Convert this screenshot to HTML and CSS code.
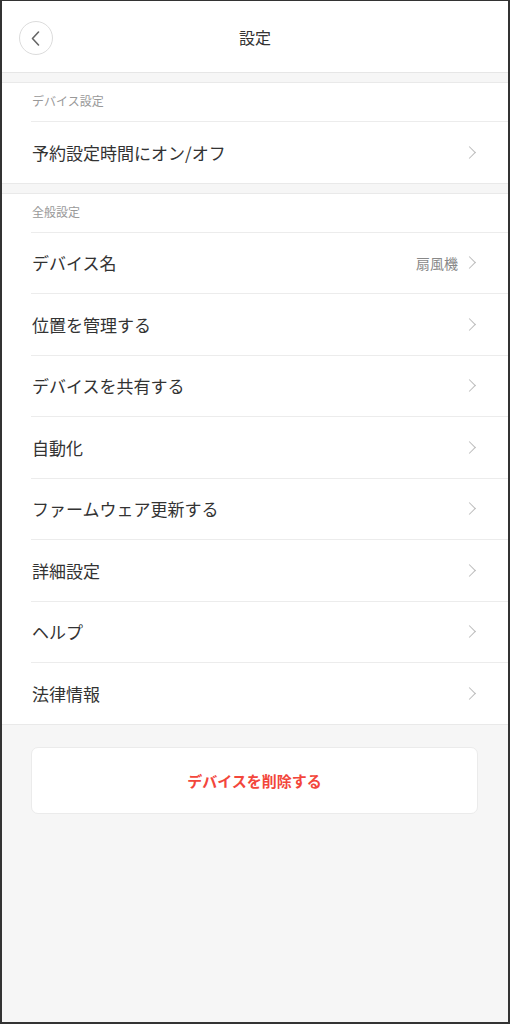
FILE: index.html
```html
<!DOCTYPE html>
<html lang="ja">
	<head>
		<meta charset="utf-8" />
		<title>設定</title>
		<link rel="stylesheet" href="styles.css">
	</head>
	<body>
		<div class="screen">
			<header class="topbar">
				<button class="back" type="button" aria-label="戻る">
					<svg width="9" height="15" viewBox="0 0 9 15"><path d="M7.5 1 L1.5 7.5 L7.5 14" fill="none" stroke="#666" stroke-width="1.6" stroke-linecap="round" stroke-linejoin="round"/></svg>
				</button>
				<h1>設定</h1>
			</header>

			<section class="group">
				<h2>デバイス設定</h2>
				<ul class="list">
					<li><span class="label">予約設定時間にオン/オフ</span><span class="arrow"></span></li>
				</ul>
			</section>

			<section class="group">
				<h2>全般設定</h2>
				<ul class="list">
					<li><span class="label">デバイス名</span><span class="value">扇風機</span><span class="arrow"></span></li>
					<li><span class="label">位置を管理する</span><span class="arrow"></span></li>
					<li><span class="label">デバイスを共有する</span><span class="arrow"></span></li>
					<li><span class="label">自動化</span><span class="arrow"></span></li>
					<li><span class="label">ファームウェア更新する</span><span class="arrow"></span></li>
					<li><span class="label">詳細設定</span><span class="arrow"></span></li>
					<li><span class="label">ヘルプ</span><span class="arrow"></span></li>
					<li><span class="label">法律情報</span><span class="arrow"></span></li>
				</ul>
			</section>

			<div class="actions">
				<button class="danger" type="button">デバイスを削除する</button>
			</div>
		</div>
	</body>
</html>
```

FILE: styles.css
```css
body {
	color: #333;
	font-family: "Noto Sans CJK JP", "Noto Sans", sans-serif;
	margin: 0;
	padding: 0;
}
h1,
h2,
ul {
	font-weight: normal;
	margin: 0;
	padding: 0;
}
ul { list-style-type: none; }


/* Frame */
.screen {
	background: #f6f6f6;
	border: 2px solid #333;
	border-top-width: 1px;
	box-sizing: border-box;
	height: 1024px;
	width: 510px;
}


/* Top bar */
.topbar {
	align-items: center;
	background: #fff;
	border-bottom: 1px solid #e6e6e6;
	display: flex;
	height: 71px;
	justify-content: center;
	position: relative;
}
.topbar h1 {
	font-size: 16px;
	line-height: 1;
}
.back {
	align-items: center;
	background: #fff;
	border: 1px solid #dcdcdc;
	border-radius: 50%;
	display: flex;
	height: 34px;
	justify-content: center;
	left: 17px;
	padding: 0 2px 0 0;
	position: absolute;
	top: 20px;
	width: 34px;
}


/* Groups */
.group {
	background: #fff;
	border-bottom: 1px solid #e9e9e9;
	border-top: 1px solid #e9e9e9;
	margin-top: 9px;
}
.group h2 {
	color: #999;
	font-size: 12px;
	height: 38px;
	line-height: 36px;
	padding-left: 30px;
}
.list li {
	align-items: center;
	border-top: 1px solid #ececec;
	display: flex;
	height: 60.5px;
	margin-left: 29px;
	padding-right: 32px;
}
.group:first-child .list li { height: 61px; }
.label {
	flex: 1;
	font-size: 17px;
	padding-left: 1px;
}
.value {
	color: #888;
	font-size: 14px;
	margin-right: 7px;
}
.arrow {
	border-right: 1.5px solid #bbb;
	border-top: 1.5px solid #bbb;
	height: 8px;
	margin-right: 2px;
	transform: rotate(45deg);
	width: 8px;
}


/* Delete */
.actions { padding: 22px 30px 0 29px; }
.danger {
	background: #fff;
	border: 1px solid #ebebeb;
	border-radius: 7px;
	color: #f3463b;
	display: block;
	font-family: inherit;
	font-size: 15px;
	font-weight: bold;
	height: 67px;
	width: 100%;
}
```
